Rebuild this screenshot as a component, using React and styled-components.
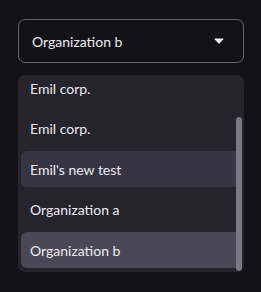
import React from 'react'
import styled, { createGlobalStyle } from 'styled-components'

const GlobalStyle = createGlobalStyle`
  html, body {
    margin: 0;
    background: #131218;
  }
  body {
    font-family: Lato, "Noto Sans", sans-serif;
    color: #ecebf1;
  }
`

const Wrapper = styled.div`
  width: 261px;
  height: 292px;
  box-sizing: border-box;
  padding: 19px 17px 0 18px;
  display: flex;
  flex-direction: column;
  gap: 12px;
`

const Trigger = styled.button`
  height: 44px;
  box-sizing: border-box;
  display: flex;
  align-items: center;
  justify-content: space-between;
  padding: 0 19px 0 13px;
  background: #131218;
  border: 1px solid #67646f;
  border-radius: 7px;
  color: #ecebf1;
  font-family: inherit;
  font-size: 14px;
`

const Menu = styled.div`
  position: relative;
  height: 197px;
  box-sizing: border-box;
  padding: 0 3px 4px;
  background: #25232c;
  border-radius: 7px;
  overflow: hidden;
  display: flex;
  flex-direction: column;
  justify-content: flex-end;
  gap: 4.5px;
`

const Item = styled.div`
  flex: none;
  height: 36px;
  display: flex;
  align-items: center;
  padding-left: 9px;
  border-radius: 6px;
  font-size: 14px;
  color: #ecebf1;
  background: ${p => (p.$selected ? '#4a4855' : p.$hover ? '#373541' : 'transparent')};
`

const Thumb = styled.div`
  position: absolute;
  right: 2px;
  top: 42px;
  bottom: 1px;
  width: 6px;
  border-radius: 3px;
  background: #7a7882;
`

const items = ['Emil corp.', 'Emil corp.', "Emil's new test", 'Organization a', 'Organization b']

export default function App() {
  const selected = 'Organization b'
  return (
    <>
      <GlobalStyle />
      <Wrapper>
        <Trigger>
          {selected}
          <svg width="10" height="6" viewBox="0 0 10 6">
            <path d="M1 0.5 H9 Q9.8 0.5 9.3 1.2 L5.4 5.4 Q5 5.8 4.6 5.4 L0.7 1.2 Q0.2 0.5 1 0.5 Z" fill="#f4f2f8" />
          </svg>
        </Trigger>
        <Menu>
          {items.map((name, i) => (
            <Item key={i} $hover={i === 2} $selected={i === 4}>
              {name}
            </Item>
          ))}
          <Thumb />
        </Menu>
      </Wrapper>
    </>
  )
}
